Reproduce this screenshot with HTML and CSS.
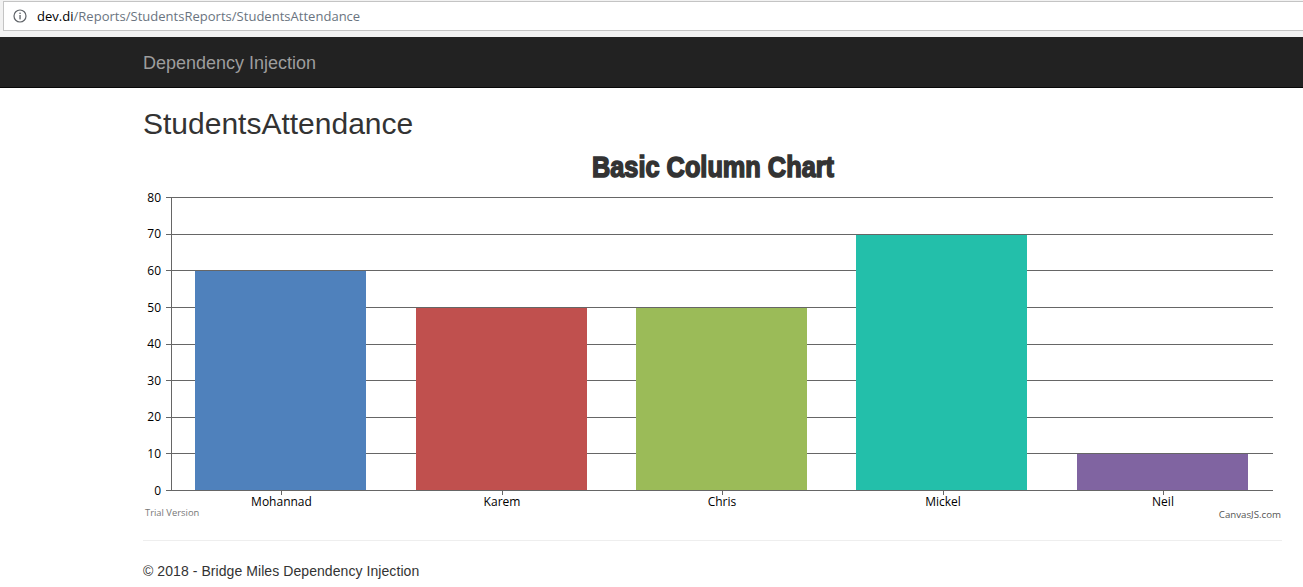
FILE: index.html
```html
<!DOCTYPE html>
<html lang="en">
<head>
<meta charset="utf-8">
<title>StudentsAttendance</title>
<link rel="stylesheet" href="styles.css">
</head>
<body>
<div class="browser-bar">
  <div class="address">
    <svg class="info" width="16" height="16" viewBox="0 0 16 16"><circle cx="8" cy="8" r="6" fill="none" stroke="#5f6368" stroke-width="1.2"/><rect x="7.4" y="7" width="1.3" height="4.4" fill="#5f6368"/><rect x="7.4" y="4.6" width="1.3" height="1.4" fill="#5f6368"/></svg>
    <span class="host">dev.di</span><span class="path">/Reports/StudentsReports/StudentsAttendance</span>
  </div>
</div>
<nav class="navbar"><a class="brand">Dependency Injection</a></nav>
<main class="container">
  <h2 class="page-title">StudentsAttendance</h2>
  <svg class="chart" width="1140" height="380" viewBox="143 145 1140 380">
    <text class="chart-title" x="713" y="177" text-anchor="middle" textLength="242" lengthAdjust="spacingAndGlyphs">Basic Column Chart</text>
    <g class="grid">
      <path d="M166 197.5H1273M166 234.5H1273M166 270.5H1273M166 307.5H1273M166 344.5H1273M166 380.5H1273M166 417.5H1273M166 453.5H1273M166 490.5H1273"/>
      <path d="M171.5 197V491"/>
      <path d="M281.5 491V495M502.5 491V495M722.5 491V495M943.5 491V495M1163.5 491V495"/>
    </g>
    <rect class="bar-blue" x="195" y="271" width="171" height="219"/>
    <rect class="bar-red" x="416" y="308" width="171" height="182"/>
    <rect class="bar-green" x="636" y="308" width="171" height="182"/>
    <rect class="bar-teal" x="856" y="235" width="171" height="255"/>
    <rect class="bar-purple" x="1077" y="454" width="171" height="36"/>
    <g class="y-labels">
      <text x="161" y="202">80</text><text x="161" y="238">70</text><text x="161" y="275">60</text>
      <text x="161" y="312">50</text><text x="161" y="348">40</text><text x="161" y="385">30</text>
      <text x="161" y="421">20</text><text x="161" y="458">10</text><text x="161" y="495">0</text>
    </g>
    <g class="x-labels">
      <text x="281.500" y="506">Mohannad</text><text x="502" y="506">Karem</text><text x="722" y="506">Chris</text>
      <text x="943" y="506">Mickel</text><text x="1163" y="506">Neil</text>
    </g>
    <text class="credit trial" x="145" y="516">Trial Version</text>
    <text class="credit site" x="1281" y="518" text-anchor="end">CanvasJS.com</text>
  </svg>
  <hr class="rule">
  <footer class="footer">© 2018 - Bridge Miles Dependency Injection</footer>
</main>
</body>
</html>
```
FILE: styles.css
```css
* { box-sizing: border-box; }
html, body { margin: 0; padding: 0; height: 587px; overflow: hidden; background: #fff; }
body { font-family: "Liberation Sans", Arial, sans-serif; color: #333; font-size: 14px; }
.browser-bar { height: 37px; background: #f2f2f2; padding: 1px 0 6px 3px; }
.address { height: 30px; background: #fff; border: 1px solid #c4c4c4; border-right: 0; display: flex; align-items: center; padding-left: 8px; font-family: "Open Sans", sans-serif; font-size: 13px; letter-spacing: .02px; }
.info { margin-right: 9px; }
.host { color: #000; }
.path { color: #6a7480; }
.navbar { height: 51px; background: #222; border-bottom: 1px solid #080808; padding: 16px 0 0 143px; }
.brand { color: #9d9d9d; font-size: 18px; line-height: 20px; display: block; }
.container { padding: 0 21px 0 143px; }
.page-title { font-size: 30px; font-weight: 400; line-height: 33px; margin: 19px 0 0; color: #333; }
.chart { display: block; margin-top: 5px; }
.chart-title { font-family: "Liberation Sans Narrow", "Liberation Sans", sans-serif; font-weight: 700; font-size: 30px; fill: #333; stroke: #333; stroke-width: 1.6; }
.grid path { fill: none; stroke: #666; stroke-width: 1; }
.bar-blue { fill: #4f81bc; }
.bar-red { fill: #c0504e; }
.bar-green { fill: #9bbb58; }
.bar-teal { fill: #23bfaa; }
.bar-purple { fill: #8064a1; }
.y-labels text { font-family: "Open Sans", sans-serif; font-size: 12px; fill: #000; text-anchor: end; }
.x-labels text { font-family: "Open Sans", sans-serif; font-size: 12px; fill: #000; text-anchor: middle; }
.credit { font-family: "Open Sans", sans-serif; font-size: 9.4px; }
.trial { fill: #777; }
.site { fill: #555; font-size: 9.7px; }
.rule { border: 0; border-top: 1px solid #eee; margin: 15px 0 0; }
.footer { margin-top: 22px; font-size: 14px; line-height: 17px; letter-spacing: .07px; }
```
